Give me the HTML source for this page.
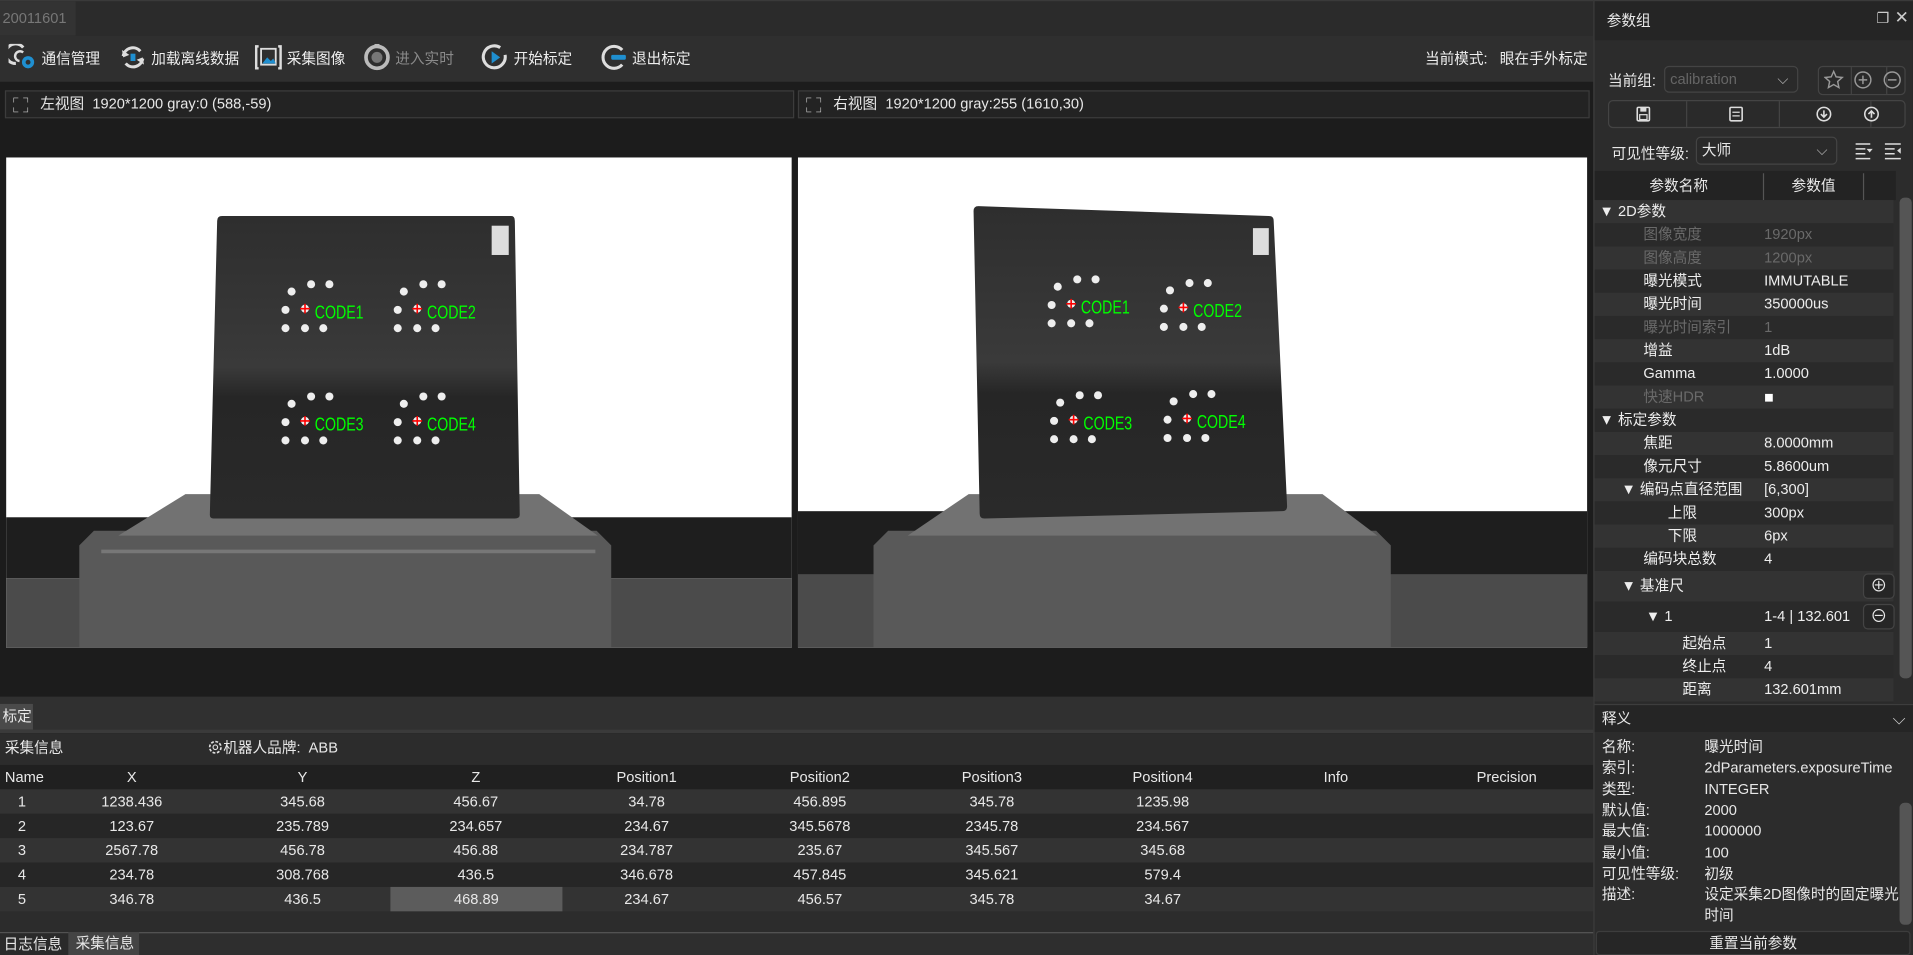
<!DOCTYPE html>
<html><head><meta charset="utf-8">
<style>
*{margin:0;padding:0;box-sizing:border-box}
html,body{width:1913px;height:955px;overflow:hidden;background:#1c1c1c}
#w{position:absolute;left:0;top:0;width:1568px;height:783px;transform:scale(1.22);transform-origin:0 0;font-family:"Liberation Sans","Noto Sans CJK SC",sans-serif;font-size:12px;color:#e8e8e8;background:#1c1c1c}
.a{position:absolute}
.tb{display:flex;align-items:center;position:absolute;top:36px;height:22px;font-size:12px;color:#eee}
.tb svg{margin-right:3px}
.vh{position:absolute;top:74px;height:23px;background:#232323;border:1px solid #3c3c3c;font-size:12px;line-height:21px;padding-left:28px}
.tr{position:absolute;left:0;width:245px;height:19px;line-height:19px;font-size:12px}
.tr .n{position:absolute;left:0;width:137px;height:19px}
.tr .v{position:absolute;left:139px;width:80px;height:19px}
.tr .x{position:absolute;left:221px;width:24px;height:19px}
.row{position:absolute;left:0;width:1306px;height:20px;line-height:20px;font-size:12px}
.row span{position:absolute;text-align:center;width:140px}
.ik{position:absolute;left:6px;width:90px}
.iv{position:absolute;left:90px}
</style></head><body><div id="w">
<svg width="0" height="0" style="position:absolute"><defs>
<linearGradient id="bd" x1="0" y1="0" x2="0" y2="1"><stop offset="0" stop-color="#2e2e2e"/><stop offset="0.5" stop-color="#3a3a3a"/><stop offset="0.6" stop-color="#262626"/><stop offset="1" stop-color="#2a2a2a"/></linearGradient>
<g id="cg" fill="#eee"><circle cx="-11" cy="-14" r="3.3"/><circle cx="5" cy="-20" r="3.3"/><circle cx="20" cy="-20" r="3.3"/><circle cx="-16" cy="1" r="3.3"/><circle cx="-16" cy="16" r="3.3"/><circle cx="0" cy="16" r="3.3"/><circle cx="15" cy="16" r="3.3"/><circle cx="0" cy="0" r="3.3"/><path d="M-4 0h8M0-4v8" stroke="#f00" stroke-width="1.3"/></g>
</defs></svg>
<!-- title bar -->
<div class="a" style="left:0;top:0;width:1306px;height:29px;background:#2b2b2b;border-top:1px solid #3a3a3a"></div>
<div class="a" style="left:0;top:1px;width:62px;height:28px;background:#333;color:#777;font-size:12px;line-height:28px;padding-left:2px">20011601</div>
<!-- toolbar -->
<div class="a" style="left:0;top:29px;width:1306px;height:38px;background:#2f2f2f"></div>
<div class="tb" style="left:7px"><svg width="24" height="22" viewBox="0 0 24 22"><path d="M12 3a8 8 0 1 0 -6 13" fill="none" stroke="#ddd" stroke-width="2.5"/><path d="M12 7a4 4 0 1 0 -3 7" fill="none" stroke="#ddd" stroke-width="2"/><circle cx="16" cy="15" r="5" fill="#1f8fd0"/><circle cx="16" cy="15" r="2" fill="#2f2f2f"/></svg>通信管理</div>
<div class="tb" style="left:97px"><svg width="24" height="22" viewBox="0 0 24 22"><path d="M18 6a8 8 0 0 0 -14 4M6 16a8 8 0 0 0 14 -4" fill="none" stroke="#ddd" stroke-width="2.5"/><path d="M3 5l1 6 5-2z M21 17l-1-6-5 2z" fill="#ddd"/><rect x="10" y="8" width="4" height="6" fill="#1f8fd0"/></svg>加载离线数据</div>
<div class="tb" style="left:208px"><svg width="24" height="22" viewBox="0 0 24 22"><path d="M4 2h-2v18h2M20 2h2v18h-2" fill="none" stroke="#ddd" stroke-width="2"/><rect x="6" y="4" width="12" height="13" fill="none" stroke="#ddd" stroke-width="1.5"/><path d="M7 16l4-5 3 3 2-2 2 4z" fill="#1f8fd0"/></svg>采集图像</div>
<div class="tb" style="left:297px;color:#8a8a8a"><svg width="24" height="22" viewBox="0 0 24 22"><circle cx="12" cy="11" r="9" fill="none" stroke="#bbb" stroke-width="3"/><circle cx="12" cy="11" r="4.5" fill="#777"/><rect x="10" y="0" width="4" height="3" fill="#bbb"/></svg>进入实时</div>
<div class="tb" style="left:394px"><svg width="24" height="22" viewBox="0 0 24 22"><path d="M16 3a9 9 0 1 0 4 6" fill="none" stroke="#ddd" stroke-width="2.5"/><path d="M9 6l7 5-7 5z" fill="#1f8fd0"/></svg>开始标定</div>
<div class="tb" style="left:491px"><svg width="24" height="22" viewBox="0 0 24 22"><path d="M19 5a9 9 0 1 0 0 12" fill="none" stroke="#ddd" stroke-width="2.5"/><rect x="10" y="9" width="12" height="4" rx="1" fill="#1f8fd0"/></svg>退出标定</div>
<div class="tb" style="left:1168px">当前模式:&nbsp;&nbsp;&nbsp;眼在手外标定</div>
<!-- view headers -->
<div class="vh" style="left:4px;width:647px"><svg class="a" style="left:6px;top:5px" width="12" height="12" viewBox="0 0 12 12"><path d="M0 4V0h4M8 0h4v4M12 8v4H8M4 12H0V8" fill="none" stroke="#ccc" stroke-width="1"/></svg>左视图&nbsp;&nbsp;1920*1200 gray:0 (588,-59)</div>
<div class="vh" style="left:654px;width:649px"><svg class="a" style="left:6px;top:5px" width="12" height="12" viewBox="0 0 12 12"><path d="M0 4V0h4M8 0h4v4M12 8v4H8M4 12H0V8" fill="none" stroke="#ccc" stroke-width="1"/></svg>右视图&nbsp;&nbsp;1920*1200 gray:255 (1610,30)</div>
<!-- left image -->
<svg class="a" style="left:5px;top:129px" width="644" height="402" viewBox="0 0 644 402">
<rect width="644" height="402" fill="#fff"/>
<rect y="295" width="644" height="50" fill="#1e1e1e"/>
<rect y="345" width="644" height="57" fill="#4b4b4b"/>
<path d="M60 318l12-12h412l12 12v84H60z" fill="#595959"/>
<path d="M92 310l55-34h290l48 34z" fill="#727272"/>
<path d="M78 323h405" stroke="#777" stroke-width="3"/>
<path d="M173 52q0-4 4-4h237q3 0 3 4l4 241q0 3-4 3H170q-3 0-3-3z" fill="url(#bd)"/>
<rect x="398" y="56" width="14" height="24" fill="#ddd"/>
<use href="#cg" x="245" y="124"/><use href="#cg" x="337" y="124"/><use href="#cg" x="245" y="216"/><use href="#cg" x="337" y="216"/>
<g fill="#0f0" font-family="Liberation Sans,sans-serif" font-size="15"><text x="253" y="132" transform="scale(1,1)" textLength="40" lengthAdjust="spacingAndGlyphs">CODE1</text><text x="345" y="132" textLength="40" lengthAdjust="spacingAndGlyphs">CODE2</text><text x="253" y="224" textLength="40" lengthAdjust="spacingAndGlyphs">CODE3</text><text x="345" y="224" textLength="40" lengthAdjust="spacingAndGlyphs">CODE4</text></g>
</svg>
<!-- right image -->
<svg class="a" style="left:654px;top:129px" width="647" height="402" viewBox="0 0 647 402">
<rect width="647" height="402" fill="#fff"/>
<rect y="290" width="647" height="52" fill="#1e1e1e"/>
<rect y="342" width="647" height="60" fill="#4b4b4b"/>
<path d="M62 318l12-12h400l12 12v84H62z" fill="#595959"/>
<path d="M90 310l50-34h290l45 34z" fill="#727272"/>
<path d="M144 44q0-4 4-4l238 8q4 0 4 4l11 234q0 4-4 4L153 296q-4 0-4-4z" fill="url(#bd)"/>
<rect x="373" y="58" width="13" height="22" fill="#ddd"/>
<use href="#cg" x="224" y="120"/><use href="#cg" x="316" y="123"/><use href="#cg" x="226" y="215"/><use href="#cg" x="319" y="214"/>
<g fill="#0f0" font-family="Liberation Sans,sans-serif" font-size="15"><text x="232" y="128" textLength="40" lengthAdjust="spacingAndGlyphs">CODE1</text><text x="324" y="131" textLength="40" lengthAdjust="spacingAndGlyphs">CODE2</text><text x="234" y="223" textLength="40" lengthAdjust="spacingAndGlyphs">CODE3</text><text x="327" y="222" textLength="40" lengthAdjust="spacingAndGlyphs">CODE4</text></g>
</svg>
<!-- bottom area -->
<div class="a" style="left:0;top:571px;width:1306px;height:27px;background:#303030"></div>
<div class="a" style="left:0;top:577px;width:27px;height:21px;background:#4a4a4a;line-height:21px;padding-left:2px;white-space:nowrap">标定</div>
<div class="a" style="left:0;top:598px;width:1306px;height:3px;background:#3a3a3a"></div>
<div class="a" style="left:0;top:601px;width:1306px;height:164px;background:#2c2c2c"></div>
<div class="a" style="left:4px;top:605px;line-height:16px">采集信息</div>
<div class="a" style="left:170px;top:605px;line-height:16px"><svg width="13" height="13" viewBox="0 0 14 14" style="vertical-align:-2px"><circle cx="7" cy="7" r="5" fill="none" stroke="#ddd" stroke-width="1.5" stroke-dasharray="2.5 1.4"/><circle cx="7" cy="7" r="2" fill="none" stroke="#ddd"/></svg>机器人品牌:&nbsp;&nbsp;ABB</div>
<div class="row" style="top:627px;background:#202020"><span style="left:4px;width:auto">Name</span><span style="left:38px">X</span><span style="left:178px">Y</span><span style="left:320px">Z</span><span style="left:460px">Position1</span><span style="left:602px">Position2</span><span style="left:743px">Position3</span><span style="left:883px">Position4</span><span style="left:1025px">Info</span><span style="left:1165px">Precision</span></div>
<div class="row" style="top:647px;background:#333"><span style="left:-52px">1</span><span style="left:38px">1238.436</span><span style="left:178px">345.68</span><span style="left:320px">456.67</span><span style="left:460px">34.78</span><span style="left:602px">456.895</span><span style="left:743px">345.78</span><span style="left:883px">1235.98</span></div>
<div class="row" style="top:667px;background:#262626"><span style="left:-52px">2</span><span style="left:38px">123.67</span><span style="left:178px">235.789</span><span style="left:320px">234.657</span><span style="left:460px">234.67</span><span style="left:602px">345.5678</span><span style="left:743px">2345.78</span><span style="left:883px">234.567</span></div>
<div class="row" style="top:687px;background:#333"><span style="left:-52px">3</span><span style="left:38px">2567.78</span><span style="left:178px">456.78</span><span style="left:320px">456.88</span><span style="left:460px">234.787</span><span style="left:602px">235.67</span><span style="left:743px">345.567</span><span style="left:883px">345.68</span></div>
<div class="row" style="top:707px;background:#262626"><span style="left:-52px">4</span><span style="left:38px">234.78</span><span style="left:178px">308.768</span><span style="left:320px">436.5</span><span style="left:460px">346.678</span><span style="left:602px">457.845</span><span style="left:743px">345.621</span><span style="left:883px">579.4</span></div>
<div class="row" style="top:727px;background:#333"><span style="left:-52px">5</span><span style="left:38px">346.78</span><span style="left:178px">436.5</span><span style="left:320px;background:#5c5c5c;width:141px">468.89</span><span style="left:460px">234.67</span><span style="left:602px">456.57</span><span style="left:743px">345.78</span><span style="left:883px">34.67</span></div>
<div class="a" style="left:0;top:764px;width:1306px;height:19px;background:#2e2e2e;border-top:1px solid #555"></div>
<div class="a" style="left:0;top:765px;width:56px;height:18px;line-height:18px;padding-left:3px;background:#2a2a2a">日志信息</div>
<div class="a" style="left:56px;top:764px;width:58px;height:19px;line-height:19px;padding-left:6px;background:#444">采集信息</div>
<!-- right panel -->
<div class="a" style="left:1306px;top:0;width:262px;height:783px;background:#2c2c2c;border-left:1px solid #3d3d3d"></div>
<div class="a" style="left:1307px;top:0;width:261px;height:33px;background:#252525;border-top:1px solid #3a3a3a"></div>
<div class="a" style="left:1317px;top:8px;font-size:12px">参数组</div>
<div class="a" style="left:1538px;top:8px;font-size:12px;color:#ccc">&#x2750;</div>
<div class="a" style="left:1553px;top:6px;font-size:14px;color:#ccc">✕</div>
<div class="a" style="left:1318px;top:57px">当前组:</div>
<div class="a" style="left:1364px;top:54px;width:110px;height:22px;border:1px solid #444;border-radius:4px;background:#2a2a2a;color:#666;line-height:20px;padding-left:4px">calibration<span class="a" style="right:7px;top:0;color:#bbb">&#x2335;</span></div>
<div class="a" style="left:1490px;top:54px;width:72px;height:24px;border:1px solid #444;border-radius:4px;background:#2a2a2a"></div>
<div class="a" style="left:1517px;top:55px;width:1px;height:22px;background:#444"></div><div class="a" style="left:1546px;top:55px;width:1px;height:22px;background:#444"></div>
<svg class="a" style="left:1495px;top:57px" width="64" height="17" viewBox="0 0 64 17"><path d="M8 1.5l2 4.5 5 .5-3.7 3.3 1 5-4.3-2.5-4.3 2.5 1-5L1 6.5l5-.5z" fill="none" stroke="#999" stroke-width="1.2"/><circle cx="32" cy="8.5" r="6.5" fill="none" stroke="#999" stroke-width="1.2"/><path d="M28.5 8.5h7M32 5v7" stroke="#999" stroke-width="1.2"/><circle cx="56" cy="8.5" r="6.5" fill="none" stroke="#999" stroke-width="1.2"/><path d="M52.5 8.5h7" stroke="#999" stroke-width="1.2"/></svg>
<div class="a" style="left:1318px;top:82px;width:244px;height:23px;border:1px solid #444;border-radius:4px;background:#2a2a2a"></div>
<div class="a" style="left:1382px;top:83px;width:1px;height:21px;background:#444"></div><div class="a" style="left:1458px;top:83px;width:1px;height:21px;background:#444"></div><div class="a" style="left:1533px;top:83px;width:1px;height:21px;background:#444"></div>
<svg class="a" style="left:1340px;top:86px" width="220" height="15" viewBox="0 0 220 15"><rect x="2" y="2" width="10" height="11" rx="1" fill="none" stroke="#ddd" stroke-width="1.3"/><rect x="4.5" y="2" width="5" height="3.5" fill="#ddd"/><rect x="4" y="8" width="6" height="4" fill="none" stroke="#ddd"/><rect x="78" y="2" width="10" height="11" rx="1" fill="none" stroke="#ddd" stroke-width="1.3"/><path d="M80 6h6M80 9h6" stroke="#ddd"/><circle cx="155" cy="7.5" r="5.5" fill="none" stroke="#ddd" stroke-width="1.3"/><path d="M155 4.5v5M152.5 7.5l2.5 2.5 2.5-2.5" fill="none" stroke="#ddd" stroke-width="1.3"/><circle cx="194" cy="7.5" r="5.5" fill="none" stroke="#ddd" stroke-width="1.3"/><path d="M194 10.5v-5M191.5 7.5l2.5-2.5 2.5 2.5" fill="none" stroke="#ddd" stroke-width="1.3"/></svg>
<div class="a" style="left:1321px;top:117px">可见性等级:</div>
<div class="a" style="left:1390px;top:112px;width:116px;height:23px;border:1px solid #444;border-radius:4px;background:#2a2a2a;line-height:21px;padding-left:4px">大师<span class="a" style="right:7px;top:0;color:#bbb">&#x2335;</span></div>
<svg class="a" style="left:1520px;top:116px" width="46" height="15" viewBox="0 0 46 15"><path d="M1 2h12M1 6h8M1 10h8M1 14h12" stroke="#ddd" stroke-width="1.2"/><path d="M10 6l2.5 3 2.5-3z" fill="#ddd"/><path d="M25 2h13M25 6h8M25 10h8M25 14h13" stroke="#ddd" stroke-width="1.2"/><path d="M38 5v5l-3-2.5z" fill="#ddd"/></svg>
<!-- tree -->
<div class="a" style="left:1307px;top:140px;width:247px;height:436px;overflow:hidden">
<div class="a" style="left:0;top:0;width:247px;height:24px;background:#232323;line-height:24px;font-size:12px"><span class="a" style="left:0;width:138px;text-align:center">参数名称</span><span class="a" style="left:138px;top:2px;width:1px;height:22px;background:#555"></span><span class="a" style="left:139px;width:81px;text-align:center">参数值</span><span class="a" style="left:220px;top:2px;width:1px;height:22px;background:#555"></span></div>
<div id="tree"></div>
</div>
<div class="a" style="left:1557px;top:162px;width:10px;height:394px;background:#555;border-radius:4px"></div>
<!-- 释义 -->
<div class="a" style="left:1307px;top:577px;width:261px;height:23px;background:#252525;border-top:1px solid #3d3d3d;line-height:22px;padding-left:6px">释义<span class="a" style="right:6px;top:0;color:#ccc;font-size:14px">&#x2335;</span></div>
<div class="a" style="left:1307px;top:601px;width:261px;height:162px;font-size:12px;line-height:17.3px">
<div class="ik" style="top:3px">名称:</div><div class="iv" style="top:3px">曝光时间</div>
<div class="ik" style="top:20px">索引:</div><div class="iv" style="top:20px">2dParameters.exposureTime</div>
<div class="ik" style="top:38px">类型:</div><div class="iv" style="top:38px">INTEGER</div>
<div class="ik" style="top:55px">默认值:</div><div class="iv" style="top:55px">2000</div>
<div class="ik" style="top:72px">最大值:</div><div class="iv" style="top:72px">1000000</div>
<div class="ik" style="top:90px">最小值:</div><div class="iv" style="top:90px">100</div>
<div class="ik" style="top:107px">可见性等级:</div><div class="iv" style="top:107px">初级</div>
<div class="ik" style="top:124px">描述:</div><div class="iv" style="top:124px;width:160px">设定采集2D图像时的固定曝光时间</div>
</div>
<div class="a" style="left:1557px;top:658px;width:10px;height:146px;max-height:100px;background:#555;border-radius:4px"></div>
<div class="a" style="left:1308px;top:763px;width:258px;height:20px;background:#262626;border:1px solid #3d3d3d;border-radius:3px;text-align:center;line-height:19px">重置当前参数</div>
<script>
var rows=[["▼ 2D参数","","",0,1],["图像宽度","1920px","",36,0,1],["图像高度","1200px","",36,0,1],["曝光模式","IMMUTABLE","",36],["曝光时间","350000us","",36],["曝光时间索引","1","",36,0,1],["增益","1dB","",36],["Gamma","1.0000","",36],["快速HDR","■","",36,0,1],["▼ 标定参数","","",0,1],["焦距","8.0000mm","",36],["像元尺寸","5.8600um","",36],["▼ 编码点直径范围","[6,300]","",18],["上限","300px","",56],["下限","6px","",56],["编码块总数","4","",36],["▼ 基准尺","","+",18],["▼ 1","1-4 | 132.601","-",38],["起始点","1","",68],["终止点","4","",68],["距离","132.601mm","",68],["","","",0]];
var h="",y=24;
rows.forEach(function(r,i){var hh=(r[2]?25:19);var bg=i%2?"#2a2a2a":"#333";var c=r[5]?"#6a6a6a":"#eee";var vc=r[1]=="■"?"#fff;font-size:13px":c;
h+='<div class="tr" style="top:'+y+'px;height:'+hh+'px;line-height:'+hh+'px;background:'+bg+'"><div class="n" style="padding-left:'+(r[3]+4)+'px;color:'+c+';height:'+hh+'px">'+r[0]+'</div><div class="v" style="color:'+vc+';height:'+hh+'px">'+r[1]+'</div>'+(r[2]?'<div class="x" style="left:220px;top:2px;height:21px;width:26px;border:1px solid #444;border-radius:4px;background:#262626;text-align:center;line-height:18px;font-size:14px">'+(r[2]=="+"?"⊕":"⊖")+'</div>':'')+'</div>';y+=hh;});
document.getElementById("tree").innerHTML=h;
</script>
</div></body></html>
